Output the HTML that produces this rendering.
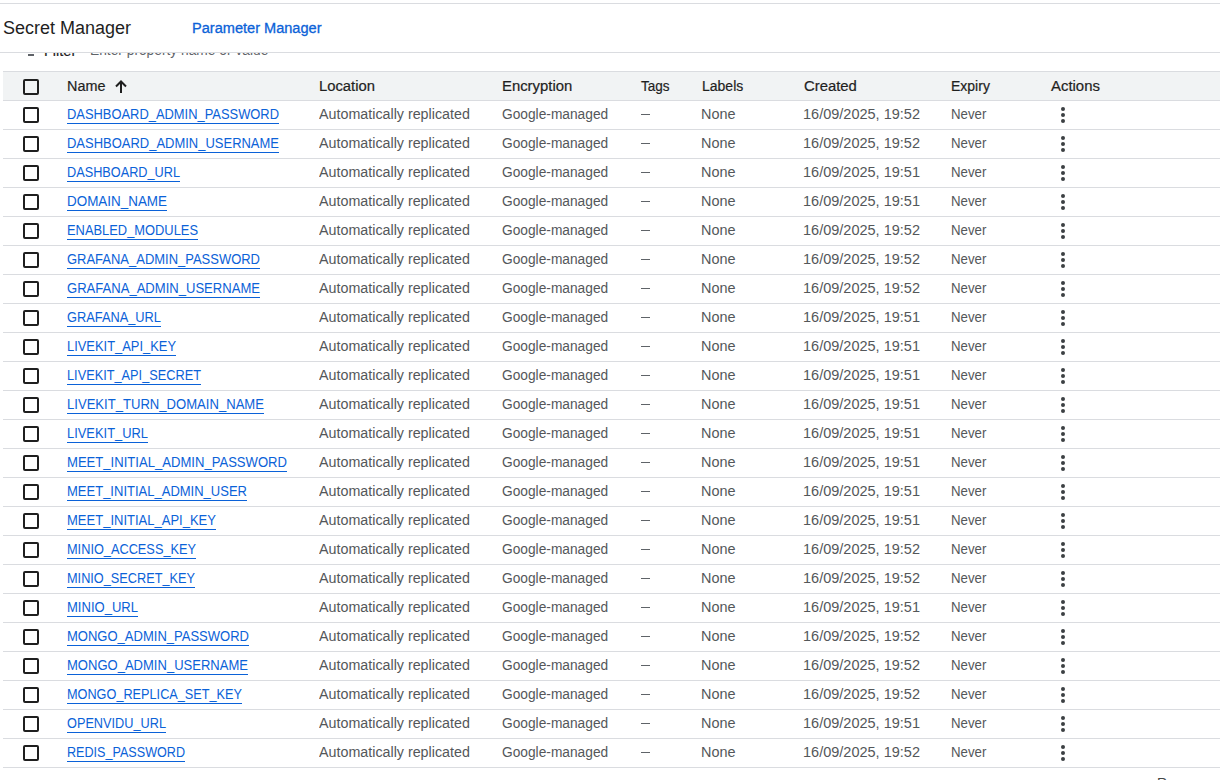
<!DOCTYPE html><html><head><meta charset="utf-8"><style>
*{margin:0;padding:0;box-sizing:border-box}
html,body{width:1220px;height:780px;overflow:hidden;background:#fff;font-family:"Liberation Sans",sans-serif}
.a{position:absolute;white-space:nowrap;transform-origin:0 0}
.hl{position:absolute;left:0;width:1220px;height:1px;background:#dadce0}
.title{font-size:18px;color:#1f1f1f;line-height:22px}
.pm{font-size:14px;color:#0b62d8;line-height:16px;-webkit-text-stroke:0.3px #0b62d8}
.filt{font-size:14px;color:#1f1f1f;line-height:16px;-webkit-text-stroke:0.2px #1f1f1f}
.ph{font-size:14px;color:#5f6368;line-height:16px}
.thead{position:absolute;left:3px;top:71px;width:1217px;height:30px;background:#f1f3f4;border-top:1px solid #dadce0;border-bottom:1px solid #dadce0}
.th{font-size:14px;color:#1f1f1f;line-height:16px;-webkit-text-stroke:0.2px #1f1f1f}
.td{font-size:14px;color:#54575a;line-height:16px}
.nm{font-size:14px;color:#0b62d8;line-height:16px;text-decoration:underline;text-underline-offset:4px;text-decoration-thickness:1px}
.cb{position:absolute;left:23px;width:16px;height:16px;border:2px solid #1f1f1f;border-radius:2px}
.rl{position:absolute;left:3px;width:1217px;height:1px;background:#dadce0}
.dsh{position:absolute;left:641px;width:9px;height:1px;background:#5f6368}
.kb{position:absolute;left:1061px;width:4px}
.kb i{display:block;width:4px;height:4px;border-radius:50%;background:#3c4043;margin-bottom:2px}
</style></head><body>
<div class="a" style="left:28px;top:54px;width:6px;height:2px;background:#5f6368"></div>
<div id="filt" class="a filt" style="left:43.96px;top:43px;transform:scaleX(1.0357);">Filter</div>
<div id="ph" class="a ph" style="left:90.02px;top:42px;transform:scaleX(0.9833);">Enter property name or value</div>
<div class="a" style="left:0;top:0;width:1220px;height:52px;background:#fff"></div>
<div class="hl" style="top:3px"></div>
<div class="hl" style="top:52px"></div>
<div id="title" class="a title" style="left:3px;top:17px;">Secret Manager</div>
<div id="pm" class="a pm" style="left:191.96px;top:20px;transform:scaleX(1.0403);">Parameter Manager</div>
<div class="thead"></div>
<div class="cb" style="top:79px"></div>
<div id="h_name" class="a th" style="left:66.97px;top:78px;transform:scaleX(1.0278);">Name</div>
<div id="h_loc" class="a th" style="left:318.94px;top:78px;transform:scaleX(1.0577);">Location</div>
<div id="h_enc" class="a th" style="left:501.94px;top:78px;transform:scaleX(1.0615);">Encryption</div>
<div id="h_tags" class="a th" style="left:641.00px;top:78px;transform:scaleX(0.9655);">Tags</div>
<div id="h_lab" class="a th" style="left:702.00px;top:78px;transform:scaleX(1.0000);">Labels</div>
<div id="h_cre" class="a th" style="left:804.00px;top:78px;transform:scaleX(1.0612);">Created</div>
<div id="h_exp" class="a th" style="left:951.00px;top:78px;transform:scaleX(1.0000);">Expiry</div>
<div id="h_act" class="a th" style="left:1051.00px;top:78px;transform:scaleX(1.0652);">Actions</div>
<svg class="a" style="left:113px;top:79px" width="16" height="16" viewBox="0 0 16 16"><path d="M8 2.5V14M3 7.5L8 2.5L13 7.5" stroke="#1f1f1f" stroke-width="2" fill="none"/></svg>
<div class="cb" style="top:107px"></div>
<div id="n0" class="a nm" style="left:67.00px;top:106px;transform:scaleX(0.9217);">DASHBOARD_ADMIN_PASSWORD</div>
<div id="auto0" class="a td" style="left:319.00px;top:106px;transform:scaleX(1.0204);">Automatically replicated</div>
<div id="goog0" class="a td" style="left:502.00px;top:106px;transform:scaleX(0.9815);">Google-managed</div>
<div class="dsh" style="top:114px"></div>
<div id="none0" class="a td" style="left:700.97px;top:106px;transform:scaleX(1.0312);">None</div>
<div id="date0" class="a td" style="left:802.96px;top:106px;transform:scaleX(1.0360);">16/09/2025, 19:52</div>
<div id="nev0" class="a td" style="left:951.05px;top:106px;transform:scaleX(0.9459);">Never</div>
<div class="kb" style="top:107px"><i></i><i></i><i></i></div>
<div class="rl" style="top:129px"></div>
<div class="cb" style="top:136px"></div>
<div id="n1" class="a nm" style="left:67.00px;top:135px;transform:scaleX(0.9269);">DASHBOARD_ADMIN_USERNAME</div>
<div id="auto1" class="a td" style="left:319.00px;top:135px;transform:scaleX(1.0204);">Automatically replicated</div>
<div id="goog1" class="a td" style="left:502.00px;top:135px;transform:scaleX(0.9815);">Google-managed</div>
<div class="dsh" style="top:143px"></div>
<div id="none1" class="a td" style="left:700.97px;top:135px;transform:scaleX(1.0312);">None</div>
<div id="date1" class="a td" style="left:802.96px;top:135px;transform:scaleX(1.0360);">16/09/2025, 19:52</div>
<div id="nev1" class="a td" style="left:951.05px;top:135px;transform:scaleX(0.9459);">Never</div>
<div class="kb" style="top:136px"><i></i><i></i><i></i></div>
<div class="rl" style="top:158px"></div>
<div class="cb" style="top:165px"></div>
<div id="n2" class="a nm" style="left:67.00px;top:164px;transform:scaleX(0.9077);">DASHBOARD_URL</div>
<div id="auto2" class="a td" style="left:319.00px;top:164px;transform:scaleX(1.0204);">Automatically replicated</div>
<div id="goog2" class="a td" style="left:502.00px;top:164px;transform:scaleX(0.9815);">Google-managed</div>
<div class="dsh" style="top:172px"></div>
<div id="none2" class="a td" style="left:700.97px;top:164px;transform:scaleX(1.0312);">None</div>
<div id="date2" class="a td" style="left:802.96px;top:164px;transform:scaleX(1.0360);">16/09/2025, 19:51</div>
<div id="nev2" class="a td" style="left:951.05px;top:164px;transform:scaleX(0.9459);">Never</div>
<div class="kb" style="top:165px"><i></i><i></i><i></i></div>
<div class="rl" style="top:187px"></div>
<div class="cb" style="top:194px"></div>
<div id="n3" class="a nm" style="left:67.00px;top:193px;transform:scaleX(0.9594);">DOMAIN_NAME</div>
<div id="auto3" class="a td" style="left:319.00px;top:193px;transform:scaleX(1.0204);">Automatically replicated</div>
<div id="goog3" class="a td" style="left:502.00px;top:193px;transform:scaleX(0.9815);">Google-managed</div>
<div class="dsh" style="top:201px"></div>
<div id="none3" class="a td" style="left:700.97px;top:193px;transform:scaleX(1.0312);">None</div>
<div id="date3" class="a td" style="left:802.96px;top:193px;transform:scaleX(1.0360);">16/09/2025, 19:51</div>
<div id="nev3" class="a td" style="left:951.05px;top:193px;transform:scaleX(0.9459);">Never</div>
<div class="kb" style="top:194px"><i></i><i></i><i></i></div>
<div class="rl" style="top:216px"></div>
<div class="cb" style="top:223px"></div>
<div id="n4" class="a nm" style="left:67.00px;top:222px;transform:scaleX(0.9200);">ENABLED_MODULES</div>
<div id="auto4" class="a td" style="left:319.00px;top:222px;transform:scaleX(1.0204);">Automatically replicated</div>
<div id="goog4" class="a td" style="left:502.00px;top:222px;transform:scaleX(0.9815);">Google-managed</div>
<div class="dsh" style="top:230px"></div>
<div id="none4" class="a td" style="left:700.97px;top:222px;transform:scaleX(1.0312);">None</div>
<div id="date4" class="a td" style="left:802.96px;top:222px;transform:scaleX(1.0360);">16/09/2025, 19:52</div>
<div id="nev4" class="a td" style="left:951.05px;top:222px;transform:scaleX(0.9459);">Never</div>
<div class="kb" style="top:223px"><i></i><i></i><i></i></div>
<div class="rl" style="top:245px"></div>
<div class="cb" style="top:252px"></div>
<div id="n5" class="a nm" style="left:67.00px;top:251px;transform:scaleX(0.9268);">GRAFANA_ADMIN_PASSWORD</div>
<div id="auto5" class="a td" style="left:319.00px;top:251px;transform:scaleX(1.0204);">Automatically replicated</div>
<div id="goog5" class="a td" style="left:502.00px;top:251px;transform:scaleX(0.9815);">Google-managed</div>
<div class="dsh" style="top:259px"></div>
<div id="none5" class="a td" style="left:700.97px;top:251px;transform:scaleX(1.0312);">None</div>
<div id="date5" class="a td" style="left:802.96px;top:251px;transform:scaleX(1.0360);">16/09/2025, 19:52</div>
<div id="nev5" class="a td" style="left:951.05px;top:251px;transform:scaleX(0.9459);">Never</div>
<div class="kb" style="top:252px"><i></i><i></i><i></i></div>
<div class="rl" style="top:274px"></div>
<div class="cb" style="top:281px"></div>
<div id="n6" class="a nm" style="left:67.00px;top:280px;transform:scaleX(0.9326);">GRAFANA_ADMIN_USERNAME</div>
<div id="auto6" class="a td" style="left:319.00px;top:280px;transform:scaleX(1.0204);">Automatically replicated</div>
<div id="goog6" class="a td" style="left:502.00px;top:280px;transform:scaleX(0.9815);">Google-managed</div>
<div class="dsh" style="top:288px"></div>
<div id="none6" class="a td" style="left:700.97px;top:280px;transform:scaleX(1.0312);">None</div>
<div id="date6" class="a td" style="left:802.96px;top:280px;transform:scaleX(1.0360);">16/09/2025, 19:52</div>
<div id="nev6" class="a td" style="left:951.05px;top:280px;transform:scaleX(0.9459);">Never</div>
<div class="kb" style="top:281px"><i></i><i></i><i></i></div>
<div class="rl" style="top:303px"></div>
<div class="cb" style="top:310px"></div>
<div id="n7" class="a nm" style="left:67.00px;top:309px;transform:scaleX(0.9153);">GRAFANA_URL</div>
<div id="auto7" class="a td" style="left:319.00px;top:309px;transform:scaleX(1.0204);">Automatically replicated</div>
<div id="goog7" class="a td" style="left:502.00px;top:309px;transform:scaleX(0.9815);">Google-managed</div>
<div class="dsh" style="top:317px"></div>
<div id="none7" class="a td" style="left:700.97px;top:309px;transform:scaleX(1.0312);">None</div>
<div id="date7" class="a td" style="left:802.96px;top:309px;transform:scaleX(1.0360);">16/09/2025, 19:51</div>
<div id="nev7" class="a td" style="left:951.05px;top:309px;transform:scaleX(0.9459);">Never</div>
<div class="kb" style="top:310px"><i></i><i></i><i></i></div>
<div class="rl" style="top:332px"></div>
<div class="cb" style="top:339px"></div>
<div id="n8" class="a nm" style="left:67.00px;top:338px;transform:scaleX(0.9214);">LIVEKIT_API_KEY</div>
<div id="auto8" class="a td" style="left:319.00px;top:338px;transform:scaleX(1.0204);">Automatically replicated</div>
<div id="goog8" class="a td" style="left:502.00px;top:338px;transform:scaleX(0.9815);">Google-managed</div>
<div class="dsh" style="top:346px"></div>
<div id="none8" class="a td" style="left:700.97px;top:338px;transform:scaleX(1.0312);">None</div>
<div id="date8" class="a td" style="left:802.96px;top:338px;transform:scaleX(1.0360);">16/09/2025, 19:51</div>
<div id="nev8" class="a td" style="left:951.05px;top:338px;transform:scaleX(0.9459);">Never</div>
<div class="kb" style="top:339px"><i></i><i></i><i></i></div>
<div class="rl" style="top:361px"></div>
<div class="cb" style="top:368px"></div>
<div id="n9" class="a nm" style="left:67.00px;top:367px;transform:scaleX(0.9112);">LIVEKIT_API_SECRET</div>
<div id="auto9" class="a td" style="left:319.00px;top:367px;transform:scaleX(1.0204);">Automatically replicated</div>
<div id="goog9" class="a td" style="left:502.00px;top:367px;transform:scaleX(0.9815);">Google-managed</div>
<div class="dsh" style="top:375px"></div>
<div id="none9" class="a td" style="left:700.97px;top:367px;transform:scaleX(1.0312);">None</div>
<div id="date9" class="a td" style="left:802.96px;top:367px;transform:scaleX(1.0360);">16/09/2025, 19:51</div>
<div id="nev9" class="a td" style="left:951.05px;top:367px;transform:scaleX(0.9459);">Never</div>
<div class="kb" style="top:368px"><i></i><i></i><i></i></div>
<div class="rl" style="top:390px"></div>
<div class="cb" style="top:397px"></div>
<div id="n10" class="a nm" style="left:67.00px;top:396px;transform:scaleX(0.9344);">LIVEKIT_TURN_DOMAIN_NAME</div>
<div id="auto10" class="a td" style="left:319.00px;top:396px;transform:scaleX(1.0204);">Automatically replicated</div>
<div id="goog10" class="a td" style="left:502.00px;top:396px;transform:scaleX(0.9815);">Google-managed</div>
<div class="dsh" style="top:404px"></div>
<div id="none10" class="a td" style="left:700.97px;top:396px;transform:scaleX(1.0312);">None</div>
<div id="date10" class="a td" style="left:802.96px;top:396px;transform:scaleX(1.0360);">16/09/2025, 19:51</div>
<div id="nev10" class="a td" style="left:951.05px;top:396px;transform:scaleX(0.9459);">Never</div>
<div class="kb" style="top:397px"><i></i><i></i><i></i></div>
<div class="rl" style="top:419px"></div>
<div class="cb" style="top:426px"></div>
<div id="n11" class="a nm" style="left:67.00px;top:425px;transform:scaleX(0.9211);">LIVEKIT_URL</div>
<div id="auto11" class="a td" style="left:319.00px;top:425px;transform:scaleX(1.0204);">Automatically replicated</div>
<div id="goog11" class="a td" style="left:502.00px;top:425px;transform:scaleX(0.9815);">Google-managed</div>
<div class="dsh" style="top:433px"></div>
<div id="none11" class="a td" style="left:700.97px;top:425px;transform:scaleX(1.0312);">None</div>
<div id="date11" class="a td" style="left:802.96px;top:425px;transform:scaleX(1.0360);">16/09/2025, 19:51</div>
<div id="nev11" class="a td" style="left:951.05px;top:425px;transform:scaleX(0.9459);">Never</div>
<div class="kb" style="top:426px"><i></i><i></i><i></i></div>
<div class="rl" style="top:448px"></div>
<div class="cb" style="top:455px"></div>
<div id="n12" class="a nm" style="left:67.00px;top:454px;transform:scaleX(0.9344);">MEET_INITIAL_ADMIN_PASSWORD</div>
<div id="auto12" class="a td" style="left:319.00px;top:454px;transform:scaleX(1.0204);">Automatically replicated</div>
<div id="goog12" class="a td" style="left:502.00px;top:454px;transform:scaleX(0.9815);">Google-managed</div>
<div class="dsh" style="top:462px"></div>
<div id="none12" class="a td" style="left:700.97px;top:454px;transform:scaleX(1.0312);">None</div>
<div id="date12" class="a td" style="left:802.96px;top:454px;transform:scaleX(1.0360);">16/09/2025, 19:51</div>
<div id="nev12" class="a td" style="left:951.05px;top:454px;transform:scaleX(0.9459);">Never</div>
<div class="kb" style="top:455px"><i></i><i></i><i></i></div>
<div class="rl" style="top:477px"></div>
<div class="cb" style="top:484px"></div>
<div id="n13" class="a nm" style="left:67.00px;top:483px;transform:scaleX(0.9292);">MEET_INITIAL_ADMIN_USER</div>
<div id="auto13" class="a td" style="left:319.00px;top:483px;transform:scaleX(1.0204);">Automatically replicated</div>
<div id="goog13" class="a td" style="left:502.00px;top:483px;transform:scaleX(0.9815);">Google-managed</div>
<div class="dsh" style="top:491px"></div>
<div id="none13" class="a td" style="left:700.97px;top:483px;transform:scaleX(1.0312);">None</div>
<div id="date13" class="a td" style="left:802.96px;top:483px;transform:scaleX(1.0360);">16/09/2025, 19:51</div>
<div id="nev13" class="a td" style="left:951.05px;top:483px;transform:scaleX(0.9459);">Never</div>
<div class="kb" style="top:484px"><i></i><i></i><i></i></div>
<div class="rl" style="top:506px"></div>
<div class="cb" style="top:513px"></div>
<div id="n14" class="a nm" style="left:67.00px;top:512px;transform:scaleX(0.9295);">MEET_INITIAL_API_KEY</div>
<div id="auto14" class="a td" style="left:319.00px;top:512px;transform:scaleX(1.0204);">Automatically replicated</div>
<div id="goog14" class="a td" style="left:502.00px;top:512px;transform:scaleX(0.9815);">Google-managed</div>
<div class="dsh" style="top:520px"></div>
<div id="none14" class="a td" style="left:700.97px;top:512px;transform:scaleX(1.0312);">None</div>
<div id="date14" class="a td" style="left:802.96px;top:512px;transform:scaleX(1.0360);">16/09/2025, 19:51</div>
<div id="nev14" class="a td" style="left:951.05px;top:512px;transform:scaleX(0.9459);">Never</div>
<div class="kb" style="top:513px"><i></i><i></i><i></i></div>
<div class="rl" style="top:535px"></div>
<div class="cb" style="top:542px"></div>
<div id="n15" class="a nm" style="left:67.00px;top:541px;transform:scaleX(0.9110);">MINIO_ACCESS_KEY</div>
<div id="auto15" class="a td" style="left:319.00px;top:541px;transform:scaleX(1.0204);">Automatically replicated</div>
<div id="goog15" class="a td" style="left:502.00px;top:541px;transform:scaleX(0.9815);">Google-managed</div>
<div class="dsh" style="top:549px"></div>
<div id="none15" class="a td" style="left:700.97px;top:541px;transform:scaleX(1.0312);">None</div>
<div id="date15" class="a td" style="left:802.96px;top:541px;transform:scaleX(1.0360);">16/09/2025, 19:52</div>
<div id="nev15" class="a td" style="left:951.05px;top:541px;transform:scaleX(0.9459);">Never</div>
<div class="kb" style="top:542px"><i></i><i></i><i></i></div>
<div class="rl" style="top:564px"></div>
<div class="cb" style="top:571px"></div>
<div id="n16" class="a nm" style="left:67.00px;top:570px;transform:scaleX(0.9089);">MINIO_SECRET_KEY</div>
<div id="auto16" class="a td" style="left:319.00px;top:570px;transform:scaleX(1.0204);">Automatically replicated</div>
<div id="goog16" class="a td" style="left:502.00px;top:570px;transform:scaleX(0.9815);">Google-managed</div>
<div class="dsh" style="top:578px"></div>
<div id="none16" class="a td" style="left:700.97px;top:570px;transform:scaleX(1.0312);">None</div>
<div id="date16" class="a td" style="left:802.96px;top:570px;transform:scaleX(1.0360);">16/09/2025, 19:52</div>
<div id="nev16" class="a td" style="left:951.05px;top:570px;transform:scaleX(0.9459);">Never</div>
<div class="kb" style="top:571px"><i></i><i></i><i></i></div>
<div class="rl" style="top:593px"></div>
<div class="cb" style="top:600px"></div>
<div id="n17" class="a nm" style="left:67.00px;top:599px;transform:scaleX(0.9313);">MINIO_URL</div>
<div id="auto17" class="a td" style="left:319.00px;top:599px;transform:scaleX(1.0204);">Automatically replicated</div>
<div id="goog17" class="a td" style="left:502.00px;top:599px;transform:scaleX(0.9815);">Google-managed</div>
<div class="dsh" style="top:607px"></div>
<div id="none17" class="a td" style="left:700.97px;top:599px;transform:scaleX(1.0312);">None</div>
<div id="date17" class="a td" style="left:802.96px;top:599px;transform:scaleX(1.0360);">16/09/2025, 19:51</div>
<div id="nev17" class="a td" style="left:951.05px;top:599px;transform:scaleX(0.9459);">Never</div>
<div class="kb" style="top:600px"><i></i><i></i><i></i></div>
<div class="rl" style="top:622px"></div>
<div class="cb" style="top:629px"></div>
<div id="n18" class="a nm" style="left:67.00px;top:628px;transform:scaleX(0.9297);">MONGO_ADMIN_PASSWORD</div>
<div id="auto18" class="a td" style="left:319.00px;top:628px;transform:scaleX(1.0204);">Automatically replicated</div>
<div id="goog18" class="a td" style="left:502.00px;top:628px;transform:scaleX(0.9815);">Google-managed</div>
<div class="dsh" style="top:636px"></div>
<div id="none18" class="a td" style="left:700.97px;top:628px;transform:scaleX(1.0312);">None</div>
<div id="date18" class="a td" style="left:802.96px;top:628px;transform:scaleX(1.0360);">16/09/2025, 19:52</div>
<div id="nev18" class="a td" style="left:951.05px;top:628px;transform:scaleX(0.9459);">Never</div>
<div class="kb" style="top:629px"><i></i><i></i><i></i></div>
<div class="rl" style="top:651px"></div>
<div class="cb" style="top:658px"></div>
<div id="n19" class="a nm" style="left:67.00px;top:657px;transform:scaleX(0.9307);">MONGO_ADMIN_USERNAME</div>
<div id="auto19" class="a td" style="left:319.00px;top:657px;transform:scaleX(1.0204);">Automatically replicated</div>
<div id="goog19" class="a td" style="left:502.00px;top:657px;transform:scaleX(0.9815);">Google-managed</div>
<div class="dsh" style="top:665px"></div>
<div id="none19" class="a td" style="left:700.97px;top:657px;transform:scaleX(1.0312);">None</div>
<div id="date19" class="a td" style="left:802.96px;top:657px;transform:scaleX(1.0360);">16/09/2025, 19:52</div>
<div id="nev19" class="a td" style="left:951.05px;top:657px;transform:scaleX(0.9459);">Never</div>
<div class="kb" style="top:658px"><i></i><i></i><i></i></div>
<div class="rl" style="top:680px"></div>
<div class="cb" style="top:687px"></div>
<div id="n20" class="a nm" style="left:67.00px;top:686px;transform:scaleX(0.9070);">MONGO_REPLICA_SET_KEY</div>
<div id="auto20" class="a td" style="left:319.00px;top:686px;transform:scaleX(1.0204);">Automatically replicated</div>
<div id="goog20" class="a td" style="left:502.00px;top:686px;transform:scaleX(0.9815);">Google-managed</div>
<div class="dsh" style="top:694px"></div>
<div id="none20" class="a td" style="left:700.97px;top:686px;transform:scaleX(1.0312);">None</div>
<div id="date20" class="a td" style="left:802.96px;top:686px;transform:scaleX(1.0360);">16/09/2025, 19:52</div>
<div id="nev20" class="a td" style="left:951.05px;top:686px;transform:scaleX(0.9459);">Never</div>
<div class="kb" style="top:687px"><i></i><i></i><i></i></div>
<div class="rl" style="top:709px"></div>
<div class="cb" style="top:716px"></div>
<div id="n21" class="a nm" style="left:67.00px;top:715px;transform:scaleX(0.9089);">OPENVIDU_URL</div>
<div id="auto21" class="a td" style="left:319.00px;top:715px;transform:scaleX(1.0204);">Automatically replicated</div>
<div id="goog21" class="a td" style="left:502.00px;top:715px;transform:scaleX(0.9815);">Google-managed</div>
<div class="dsh" style="top:723px"></div>
<div id="none21" class="a td" style="left:700.97px;top:715px;transform:scaleX(1.0312);">None</div>
<div id="date21" class="a td" style="left:802.96px;top:715px;transform:scaleX(1.0360);">16/09/2025, 19:51</div>
<div id="nev21" class="a td" style="left:951.05px;top:715px;transform:scaleX(0.9459);">Never</div>
<div class="kb" style="top:716px"><i></i><i></i><i></i></div>
<div class="rl" style="top:738px"></div>
<div class="cb" style="top:745px"></div>
<div id="n22" class="a nm" style="left:67.00px;top:744px;transform:scaleX(0.8993);">REDIS_PASSWORD</div>
<div id="auto22" class="a td" style="left:319.00px;top:744px;transform:scaleX(1.0204);">Automatically replicated</div>
<div id="goog22" class="a td" style="left:502.00px;top:744px;transform:scaleX(0.9815);">Google-managed</div>
<div class="dsh" style="top:752px"></div>
<div id="none22" class="a td" style="left:700.97px;top:744px;transform:scaleX(1.0312);">None</div>
<div id="date22" class="a td" style="left:802.96px;top:744px;transform:scaleX(1.0360);">16/09/2025, 19:52</div>
<div id="nev22" class="a td" style="left:951.05px;top:744px;transform:scaleX(0.9459);">Never</div>
<div class="kb" style="top:745px"><i></i><i></i><i></i></div>
<div class="rl" style="top:767px"></div>
<div class="a td" style="left:1157px;top:775px;color:#444746">Rows per page</div>
</body></html>
